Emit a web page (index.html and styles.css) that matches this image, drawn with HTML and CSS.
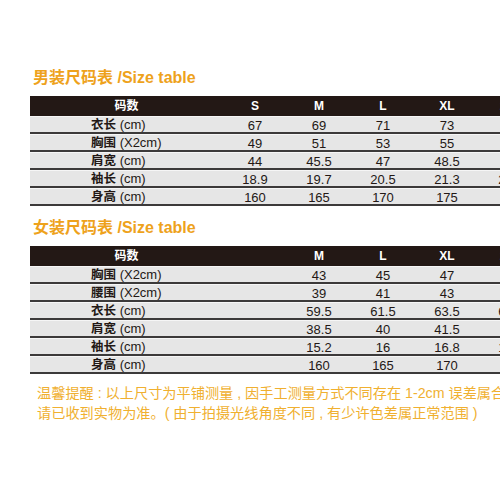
FILE: index.html
```html
<!DOCTYPE html>
<html>
<head>
<meta charset="utf-8">
<link rel="stylesheet" href="styles.css">
</head>
<body>
<div class="page">
  <h2 class="title">男装尺码表 /Size table</h2>
  <div class="table">
    <div class="row head"><span class="lab">码数</span><span>S</span><span>M</span><span>L</span><span>XL</span><span>2XL</span></div>
    <div class="row"><span class="lab"><b>衣长</b> (cm)</span><span>67</span><span>69</span><span>71</span><span>73</span><span>75</span></div>
    <div class="row"><span class="lab"><b>胸围</b> (X2cm)</span><span>49</span><span>51</span><span>53</span><span>55</span><span>57</span></div>
    <div class="row"><span class="lab"><b>肩宽</b> (cm)</span><span>44</span><span>45.5</span><span>47</span><span>48.5</span><span>50</span></div>
    <div class="row"><span class="lab"><b>袖长</b> (cm)</span><span>18.9</span><span>19.7</span><span>20.5</span><span>21.3</span><span>22.1</span></div>
    <div class="row"><span class="lab"><b>身高</b> (cm)</span><span>160</span><span>165</span><span>170</span><span>175</span><span>180</span></div>
  </div>

  <h2 class="title second">女装尺码表 /Size table</h2>
  <div class="table">
    <div class="row head"><span class="lab">码数</span><span></span><span>M</span><span>L</span><span>XL</span><span>2XL</span></div>
    <div class="row"><span class="lab"><b>胸围</b> (X2cm)</span><span></span><span>43</span><span>45</span><span>47</span><span>49</span></div>
    <div class="row"><span class="lab"><b>腰围</b> (X2cm)</span><span></span><span>39</span><span>41</span><span>43</span><span>45</span></div>
    <div class="row"><span class="lab"><b>衣长</b> (cm)</span><span></span><span>59.5</span><span>61.5</span><span>63.5</span><span>65.5</span></div>
    <div class="row"><span class="lab"><b>肩宽</b> (cm)</span><span></span><span>38.5</span><span>40</span><span>41.5</span><span>43</span></div>
    <div class="row"><span class="lab"><b>袖长</b> (cm)</span><span></span><span>15.2</span><span>16</span><span>16.8</span><span>17.6</span></div>
    <div class="row"><span class="lab"><b>身高</b> (cm)</span><span></span><span>160</span><span>165</span><span>170</span><span>175</span></div>
  </div>

  <div class="note">
    <p>温馨提醒 : 以上尺寸为平铺测量 , 因手工测量方式不同存在 1-2cm 误差属合理范围 ,</p>
    <p>请已收到实物为准。( 由于拍摄光线角度不同 , 有少许色差属正常范围 )</p>
  </div>
</div>
</body>
</html>
```

FILE: styles.css
```css
html, body {
  margin: 0;
  padding: 0;
  background: #ffffff;
  overflow: hidden;
  width: 500px;
  height: 500px;
}

.page {
  padding-top: 68px;
  font-family: "Liberation Sans", "Noto Sans CJK SC", sans-serif;
  color: #231815;
}

.title {
  margin: 0 0 8px 33px;
  height: 20px;
  line-height: 20px;
  font-size: 16px;
  font-weight: bold;
  color: #eea21c;
  white-space: nowrap;
}

.title.second {
  margin-top: 12px;
}

.table {
  margin-left: 30px;
  width: 513px;
}

.row {
  display: grid;
  grid-template-columns: 193px repeat(5, 64px);
  height: 18px;
  box-sizing: border-box;
  background: #e6e6e6;
  border-top: 1px solid #f6f6f6;
  border-bottom: 2px solid #3c3a3a;
  align-items: center;
  font-size: 13px;
  white-space: nowrap;
}

.row span {
  text-align: center;
  line-height: 15px;
}

.row .lab {
  text-align: left;
  padding-left: 61px;
}

.row .lab b {
  font-size: 12.5px;
}

.row.head {
  height: 20px;
  background: #231815;
  border: none;
  color: #ffffff;
  font-weight: bold;
  font-size: 12px;
}

.row.head span {
  line-height: 20px;
}

.row.head .lab {
  text-align: center;
  padding-left: 0;
}

.note {
  margin: 9px 0 0 37px;
  color: #f0b030;
  font-size: 14.2px;
}

.note p {
  margin: 0;
  height: 20px;
  line-height: 20px;
  white-space: nowrap;
}
```
